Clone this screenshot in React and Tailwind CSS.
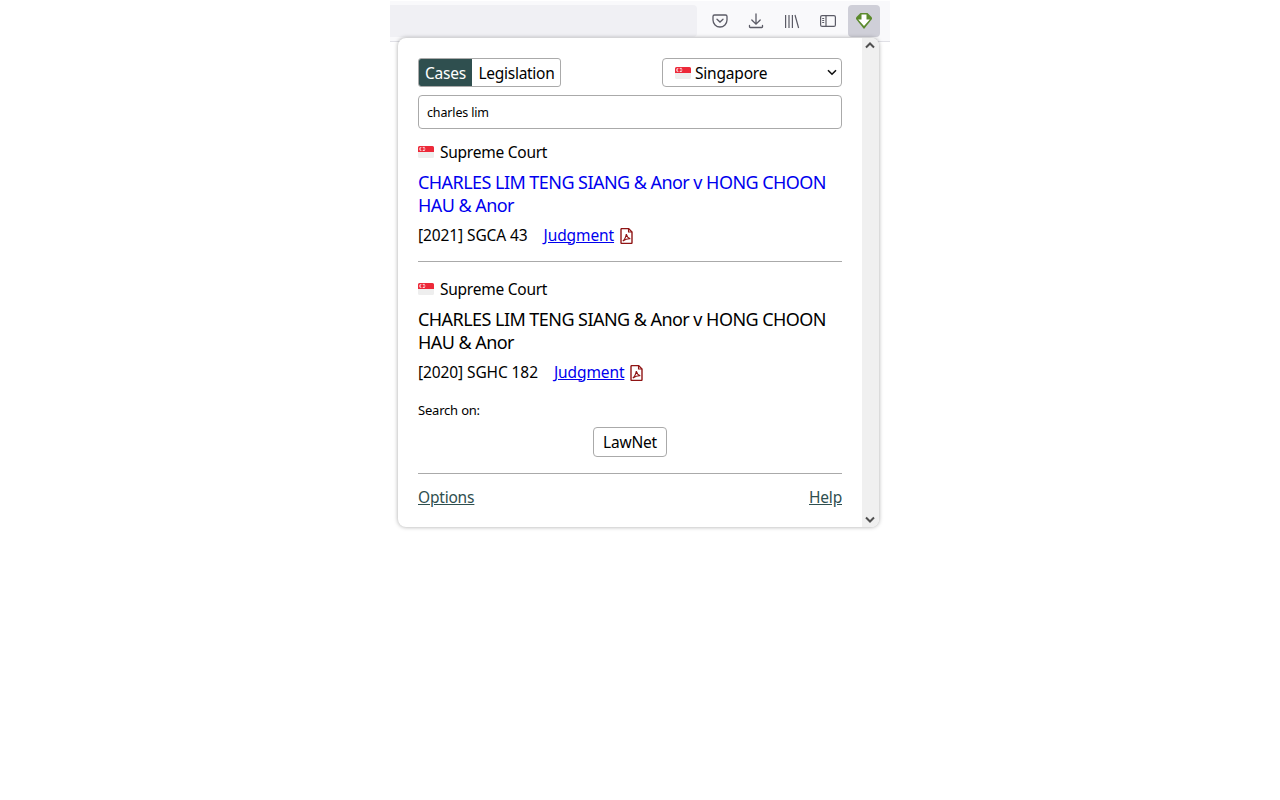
import React from "react";

const font = "font-['Noto_Sans','Open_Sans',sans-serif]";

const SgFlag = () => (
  <svg width="16" height="12" viewBox="0 0 16 12" className="shrink-0">
    <rect width="16" height="12" rx="1.5" fill="#eeeeee" />
    <path d="M1.5 0h13A1.5 1.5 0 0 1 16 1.5V6H0V1.500A1.500 1.500 0 0 1 1.500 0z" fill="#ed2939" />
    <circle cx="3.400" cy="3" r="2.100" fill="#fff" />
    <circle cx="4.300" cy="3" r="1.900" fill="#ed2939" />
    <path d="M4.800 1.400h2M5.400 3h2M4.800 4.500h2" stroke="#fff" strokeWidth="0.800" />
  </svg>
);

const PdfIcon = () => (
  <svg width="13" height="16" viewBox="0 0 13 16" fill="none" stroke="#8f1414" className="shrink-0">
    <path d="M1 1.500a1 1 0 0 1 1-1h6.500l3.500 3.500v10.500a1 1 0 0 1-1 1h-9a1 1 0 0 1-1-1z" strokeWidth="1.400" />
    <path d="M8.500 0.500v3.500h3.500" strokeWidth="1.100" />
    <path d="M2.800 13c1.700-1.200 3-3.800 3.500-6.800c.5 2.200 1.600 3.900 4 4.600c-2.500-.2-5 .6-7.500 2.200z" strokeWidth="1.100" />
  </svg>
);

const Pocket = () => (
  <svg width="16" height="16" viewBox="0 0 16 16" fill="none" stroke="#5b5b66" strokeWidth="1.300">
    <path d="M2.500 2h11A1.500 1.500 0 0 1 15 3.500V7a7 7 0 0 1-14 0V3.500A1.500 1.500 0 0 1 2.500 2z" />
    <path d="M5 6.200l3 2.800l3-2.800" strokeLinecap="round" />
  </svg>
);

const Download = () => (
  <svg width="16" height="16" viewBox="0 0 16 16" fill="none" stroke="#5b5b66" strokeWidth="1.300" strokeLinecap="round">
    <path d="M8 1v10M3.800 7l4.200 4.200L12.200 7" />
    <path d="M1.500 12.500v1.300a.7.7 0 0 0 .7.700h11.600a.7.7 0 0 0 .7-.7v-1.300" />
  </svg>
);

const Library = () => (
  <svg width="16" height="16" viewBox="0 0 16 16" fill="none" stroke="#5b5b66" strokeWidth="1.200">
    <path d="M1.600 2v13M5 2v13M8.400 2v13M11 2l3.600 13" />
  </svg>
);

const Sidebar = () => (
  <svg width="16" height="16" viewBox="0 0 16 16" fill="none" stroke="#5b5b66" strokeWidth="1.200">
    <rect x="0.600" y="2.600" width="14.800" height="10.800" rx="1.500" />
    <path d="M6 2.600v10.800" />
    <path d="M2.200 5.500h2M2.200 7.500h2M2.200 9.500h2" />
  </svg>
);

const Chevron = ({ up }) => (
  <svg width="10" height="7" viewBox="0 0 10 7" fill="none" stroke="#505050" strokeWidth="2">
    <path d={up ? "M1 5.500l4-4l4 4" : "M1 1.500l4 4l4-4"} />
  </svg>
);

const Result = ({ title, linked, citation, divider }) => (
  <div>
    <div className="flex items-center gap-[6px] h-[24px] text-[15.500px] tracking-[-0.25px] text-black">
      <span className="-mt-[2px]">
        <SgFlag />
      </span>
      <span>Supreme Court</span>
    </div>
    <div
      className={`mt-[6px] text-[18px] leading-[23px] tracking-[-0.55px] ${
        linked ? "text-[#0000ee]" : "text-black"
      }`}>
      {title}
    </div>
    <div className="mt-[8px] h-[21px] flex items-center text-[15.500px] tracking-[-0.1px] text-black">
      <span>{citation}</span>
      <a className="ml-[16px] text-[#0000ee] underline">Judgment</a>
      <span className="ml-[6px]">
        <PdfIcon />
      </span>
    </div>
    {divider && <div className="mt-[15px] mb-[16px] h-px bg-[#aaaaaa]" />}
  </div>
);

export default function App() {
  return (
    <div className={`w-[1280px] h-[800px] bg-white overflow-hidden ${font}`}>
      <div className="w-[500px] mx-auto">
        <div className="h-[42px] bg-[#f9f9fb] border-b border-[#e0e0e6] border-t border-t-white flex items-start pt-[4px] pr-[10px]">
          <div className="w-[307px] h-[32px] bg-[#f0f0f4] rounded-r-[4px]" />
          <div className="flex-1 flex justify-end items-center gap-[4px]">
            <div className="w-[32px] h-[32px] flex items-center justify-center"><Pocket /></div>
            <div className="w-[32px] h-[32px] flex items-center justify-center"><Download /></div>
            <div className="w-[32px] h-[32px] flex items-center justify-center"><Library /></div>
            <div className="w-[32px] h-[32px] flex items-center justify-center"><Sidebar /></div>
            <div className="w-[32px] h-[32px] flex items-center justify-center bg-[#cfcfd8] rounded-[4px]">
              <svg width="16" height="16" viewBox="0 0 16 16">
                <path d="M4.500 0h7L16 4.500V6L8 16L0 6V4.500z" fill="#5b8a2c" />
                <path d="M5.500 1.500h5v5h3.300L8 13L2.200 6.500h3.300z" fill="#fff" />
              </svg>
            </div>
          </div>
        </div>

        <div className="relative -mt-[4px] ml-[8px] w-[481px] h-[489px] bg-white rounded-[8px] shadow-[0_0_4px_rgba(0,0,0,0.35)] flex overflow-hidden">
          <div className="w-[464px] px-[20px] pt-[20px]">
            <div className="flex justify-between h-[29px]">
              <div className="flex h-[29px] border border-[#aaaaaa] rounded-[3px] overflow-hidden text-[15.500px] leading-[29px] tracking-[-0.2px]">
                <div className="w-[54px] -ml-px pl-px text-center bg-[#2f4f4f] text-white">Cases</div>
                <div className="w-[88px] pl-[1px] text-center tracking-[-0.28px] text-black">Legislation</div>
              </div>
              <div className="w-[180px] h-[29px] border border-[#aaaaaa] rounded-[4px] flex items-center pl-[12px] pr-[4px] text-[15.500px] tracking-[-0.2px] text-black">
                <SgFlag />
                <span className="ml-[4px] flex-1 pt-[2px]">Singapore</span>
                <svg width="10" height="7" viewBox="0 0 10 7" fill="none" stroke="#111" strokeWidth="1.600">
                  <path d="M1 1.200l4 4l4-4" />
                </svg>
              </div>
            </div>
            <div className="mt-[8px] h-[34px] border border-[#aaaaaa] rounded-[4px] flex items-center pl-[8px] pt-[2px] text-[12.500px] tracking-[-0.15px] text-black">
              charles lim
            </div>
            <div className="mt-[12px]">
              <Result
                linked
                divider
                title="CHARLES LIM TENG SIANG & Anor v HONG CHOON HAU & Anor"
                citation="[2021] SGCA 43"
              />
              <Result
                title="CHARLES LIM TENG SIANG & Anor v HONG CHOON HAU & Anor"
                citation="[2020] SGHC 182"
              />
            </div>
            <div className="mt-[17px] text-[13px] leading-[20px] tracking-[-0.2px] text-black">Search on:</div>
            <div className="mt-[7px] flex justify-center">
              <button className="w-[74px] h-[30px] pt-[2px] border border-[#aaaaaa] rounded-[4px] bg-white text-[15.500px] tracking-[-0.2px] text-black">
                LawNet
              </button>
            </div>
            <div className="mt-[16px] h-px bg-[#aaaaaa]" />
            <div className="mt-[12px] flex justify-between text-[15.500px] tracking-[-0.2px] text-[#2f4f4f] underline">
              <a>Options</a>
              <a>Help</a>
            </div>
          </div>
          <div className="w-[17px] bg-[#f0f0f0] flex flex-col items-center justify-between py-[4px] pr-px">
            <Chevron up />
            <Chevron />
          </div>
        </div>
      </div>
    </div>
  );
}
